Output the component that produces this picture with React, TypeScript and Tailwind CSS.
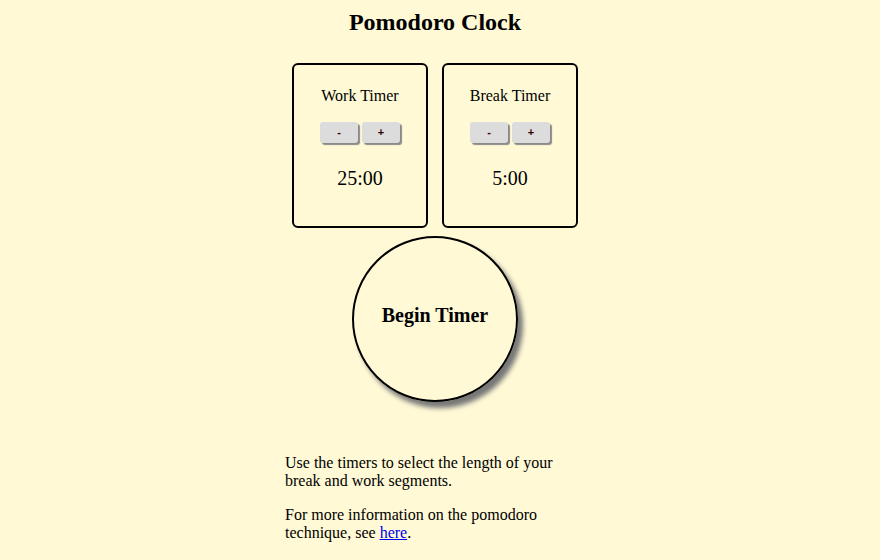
import { useState } from "react";

function TimerCard({
  label,
  minutes,
  onDec,
  onInc,
}: {
  label: string;
  minutes: number;
  onDec: () => void;
  onInc: () => void;
}) {
  return (
    <div className="flex h-[165px] w-[136px] flex-col items-center rounded-[6px] border-2 border-black">
      <p className="mt-[21px] text-[16px] leading-[20px]">{label}</p>
      <div className="mt-[16px] flex gap-[4px]">
        <button
          type="button"
          onClick={onDec}
          className="h-[21px] w-[38px] rounded-[3px] bg-[#dcdcdc] text-[11px] font-bold leading-[21px] text-[#300] shadow-[2px_2px_1px_#8a8a8a]"
          style={{ fontFamily: '"Liberation Sans", Arial, sans-serif' }}
        >
          -
        </button>
        <button
          type="button"
          onClick={onInc}
          className="h-[21px] w-[38px] rounded-[3px] bg-[#dcdcdc] text-[11px] font-bold leading-[21px] text-[#300] shadow-[2px_2px_1px_#8a8a8a]"
          style={{ fontFamily: '"Liberation Sans", Arial, sans-serif' }}
        >
          +
        </button>
      </div>
      <p className="mt-[23px] text-[20px] leading-[24px]">{minutes}:00</p>
    </div>
  );
}

export default function App() {
  const [work, setWork] = useState(25);
  const [rest, setRest] = useState(5);

  return (
    <div
      className="min-h-[560px] w-full bg-[#fff9d6] pr-[10px] text-black"
      style={{ fontFamily: '"Liberation Serif", "Times New Roman", serif' }}
    >
      <div className="flex flex-col items-center">
        <h1 className="mt-[8px] text-[24px] font-bold leading-[28px]">Pomodoro Clock</h1>

        <div className="mt-[27px] flex gap-[14px]">
          <TimerCard
            label="Work Timer"
            minutes={work}
            onDec={() => setWork((m) => Math.max(1, m - 1))}
            onInc={() => setWork((m) => m + 1)}
          />
          <TimerCard
            label="Break Timer"
            minutes={rest}
            onDec={() => setRest((m) => Math.max(1, m - 1))}
            onInc={() => setRest((m) => m + 1)}
          />
        </div>

        <button
          type="button"
          className="mt-[8px] flex h-[166px] w-[166px] items-center justify-center rounded-full border-2 border-black pb-[8px] text-[20px] font-bold shadow-[5px_6px_5px_#777]"
        >
          Begin Timer
        </button>

        <div className="mt-[52px] w-[300px] text-[16px] leading-[18px]">
          <p>Use the timers to select the length of your break and work segments.</p>
          <p className="mt-[16px]">
            For more information on the pomodoro technique, see{" "}
            <a href="#" className="text-[#0000ee] underline">
              here
            </a>
            .
          </p>
        </div>
      </div>
    </div>
  );
}
